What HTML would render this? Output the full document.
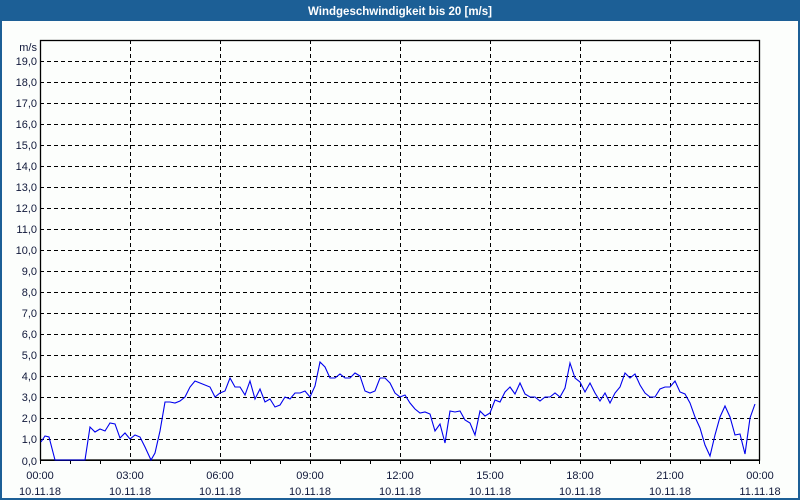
<!DOCTYPE html>
<html><head><meta charset="utf-8"><style>
html,body{margin:0;padding:0;background:#fcfefc;}
svg{display:block;}
</style></head><body>
<svg width="800" height="500" xmlns="http://www.w3.org/2000/svg" font-family="Liberation Sans, DejaVu Sans, sans-serif">
<rect x="0" y="0" width="800" height="500" fill="#fcfefc"/>
<rect x="0" y="0" width="800" height="21" fill="#1c5f96"/>
<rect x="0" y="0" width="2" height="500" fill="#1c5f96"/>
<rect x="798" y="0" width="2" height="500" fill="#1c5f96"/>
<rect x="0" y="498" width="800" height="2" fill="#1c5f96"/>
<text x="400" y="15" fill="#fff" font-size="11.5" font-weight="bold" text-anchor="middle">Windgeschwindigkeit bis 20 [m/s]</text>
<g stroke="#000" stroke-width="1" stroke-dasharray="4,3" fill="none">
<path id="h" d="M40 439.5H758M40 418.5H758M40 397.5H758M40 376.5H758M40 355.5H758M40 334.5H758M40 313.5H758M40 292.5H758M40 271.5H758M40 250.5H758M40 229.5H758M40 208.5H758M40 187.5H758M40 166.5H758M40 145.5H758M40 124.5H758M40 103.5H758M40 82.5H758M40 61.5H758"/>
<path d="M130.5 40V460M220.5 40V460M310.5 40V460M400.5 40V460M490.5 40V460M580.5 40V460M670.5 40V460"/>
</g>
<rect x="40.5" y="40.5" width="719" height="419.5" fill="none" stroke="#000" stroke-width="1.3"/>
<path d="M40 460.5H760M40.5 460v4M70.5 460v4M100.5 460v4M130.5 460v4M160.5 460v4M190.5 460v4M220.5 460v4M250.5 460v4M280.5 460v4M310.5 460v4M340.5 460v4M370.5 460v4M400.5 460v4M430.5 460v4M460.5 460v4M490.5 460v4M520.5 460v4M550.5 460v4M580.5 460v4M610.5 460v4M640.5 460v4M670.5 460v4M700.5 460v4M730.5 460v4M759.5 460v4" stroke="#000" stroke-width="1"/>
<g font-size="11" fill="#10183a" text-anchor="end">
<text x="37" y="51">m/s</text>
<text x="37" y="65">19,0</text><text x="37" y="86">18,0</text><text x="37" y="107">17,0</text><text x="37" y="128">16,0</text><text x="37" y="149">15,0</text><text x="37" y="170">14,0</text><text x="37" y="191">13,0</text><text x="37" y="212">12,0</text><text x="37" y="233">11,0</text><text x="37" y="254">10,0</text><text x="37" y="275">9,0</text><text x="37" y="296">8,0</text><text x="37" y="317">7,0</text><text x="37" y="338">6,0</text><text x="37" y="359">5,0</text><text x="37" y="380">4,0</text><text x="37" y="401">3,0</text><text x="37" y="422">2,0</text><text x="37" y="443">1,0</text><text x="37" y="465">0,0</text>
</g>
<g font-size="11" fill="#10183a" text-anchor="middle">
<text x="40" y="479">00:00</text><text x="40" y="495">10.11.18</text>
<text x="130" y="479">03:00</text><text x="130" y="495">10.11.18</text>
<text x="220" y="479">06:00</text><text x="220" y="495">10.11.18</text>
<text x="310" y="479">09:00</text><text x="310" y="495">10.11.18</text>
<text x="400" y="479">12:00</text><text x="400" y="495">10.11.18</text>
<text x="490" y="479">15:00</text><text x="490" y="495">10.11.18</text>
<text x="580" y="479">18:00</text><text x="580" y="495">10.11.18</text>
<text x="670" y="479">21:00</text><text x="670" y="495">10.11.18</text>
<text x="760" y="479">00:00</text><text x="760" y="495">11.11.18</text>
</g>
<polyline fill="none" stroke="#0000ee" stroke-width="1.1" points="41,442 45,436 49,437 55,460 85,460 90,427 95,432 100,429 105,431 110,423 115,424 120,438 125,433 130,439 135,435 140,437 145,447 151,460 155,453 160,431 165,402 170,402 175,403 180,401 185,397 190,387 195,381 200,383 210,387 215,397 220,393 225,391 230,378 235,387 240,387 245,395 250,381 255,399 260,389 265,402 270,399 275,407 280,405 285,397 290,399 295,393 300,393 305,391 310,397 315,386 320,362 325,367 330,378 335,378 340,374 345,378 350,378 355,373 360,376 365,391 370,393 375,391 380,378 385,378 390,383 395,393 400,397 405,395 410,403 415,409 420,413 425,412 430,414 435,431 440,424 445,443 450,411 455,412 460,411 465,420 470,423 475,435 480,411 485,416 490,413 495,400 500,402 505,392 510,387 515,394 520,383 525,394 530,397 535,397 540,401 545,397 550,397 555,393 560,397 565,388 570,363 575,378 580,382 585,392 590,383 595,393 600,401 605,393 610,403 615,393 620,387 625,373 630,378 635,374 640,385 645,393 650,397 655,397 660,389 665,387 670,387 675,381 680,392 685,394 690,403 695,417 700,428 705,445 710,456 715,435 720,417 725,406 730,417 735,435 740,434 745,454 750,418 755,404"/>
</svg>
</body></html>
